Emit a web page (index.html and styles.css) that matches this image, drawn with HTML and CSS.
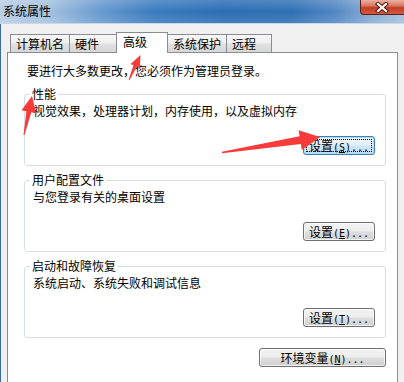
FILE: index.html
```html
<!DOCTYPE html>
<html lang="zh-CN">
<head>
<meta charset="utf-8">
<title>系统属性</title>
<link rel="stylesheet" href="styles.css">
</head>
<body>
<div class="window">
  <div class="titlebar">
    <span class="title">系统属性</span>
    <div class="close">
      <svg width="14" height="11" viewBox="0 0 14 11">
        <path d="M3 2 L11 9 M11 2 L3 9" stroke="#5a1d14" stroke-width="4.2" stroke-linecap="square" fill="none"/>
        <path d="M3 2 L11 9 M11 2 L3 9" stroke="#ffffff" stroke-width="2.2" stroke-linecap="square" fill="none"/>
      </svg>
    </div>
  </div>
  <div class="body">
    <div class="tabs">
      <div class="tab">计算机名</div>
      <div class="tab tab-hw">硬件</div>
      <div class="tab active">高级</div>
      <div class="tab">系统保护</div>
      <div class="tab">远程</div>
    </div>
    <div class="panel">
      <p class="intro">要进行大多数更改，您必须作为管理员登录。</p>
      <fieldset class="group">
        <legend>性能</legend>
        <div class="group-body">
          <p class="desc">视觉效果，处理器计划，内存使用，以及虚拟内存</p>
          <div class="actions"><button class="btn default">设置<span class="mn">(<u>S</u>)...</span></button></div>
        </div>
      </fieldset>
      <fieldset class="group">
        <legend>用户配置文件</legend>
        <div class="group-body">
          <p class="desc">与您登录有关的桌面设置</p>
          <div class="actions"><button class="btn">设置<span class="mn">(<u>E</u>)...</span></button></div>
        </div>
      </fieldset>
      <fieldset class="group">
        <legend>启动和故障恢复</legend>
        <div class="group-body">
          <p class="desc">系统启动、系统失败和调试信息</p>
          <div class="actions"><button class="btn">设置<span class="mn">(<u>T</u>)...</span></button></div>
        </div>
      </fieldset>
      <div class="env-row"><button class="btn wide">环境变量<span class="mn">(<u>N</u>)...</span></button></div>
    </div>
  </div>
  <svg class="annot" width="404" height="382" viewBox="0 0 404 382">
    <polygon points="140.5,55 139.8,68 136.9,66.7 129.4,80.2 128.6,79.8 133.5,65.3 130.6,64"/>
    <polygon points="32,96 36.2,113.2 31.3,112.2 24.5,135.1 23.5,134.9 26.4,111.2 21.5,110.2"/>
    <polygon points="320,137 301.8,150 300.8,144 222.1,153.3 221.9,151.7 299.6,136.2 298.6,130.2"/>
  </svg>
</div>
</body>
</html>
```
FILE: styles.css
```css
* { box-sizing: border-box; }
html, body { margin: 0; padding: 0; }
body {
  width: 404px;
  height: 382px;
  overflow: hidden;
  background: #f0f0f0;
  font-family: "Noto Sans CJK SC", "Noto Sans", sans-serif;
  font-size: 12px;
  color: #000;
}
.window {
  position: relative;
  width: 404px;
  height: 382px;
  overflow: hidden;
  background: #f0f0f0;
}
.titlebar {
  height: 24px;
  display: flex;
  justify-content: space-between;
  align-items: flex-start;
  background:
    linear-gradient(rgba(255,255,255,0.18), rgba(255,255,255,0) 50%, rgba(255,255,255,0.12)),
    linear-gradient(90deg, #b9cde3 0%, #a3c0df 12%, #6699cf 25%, #3a7bbf 38%, #2c6db3 55%, #2e6fb4 72%, #5287c2 83%, #88acd4 92%, #a6c2df 100%);
  border-bottom: 1px solid #c9d8e8;
}
.title {
  padding: 4px 0 0 3px;
  line-height: 14px;
  font-size: 12px;
}
.close {
  width: 50px;
  height: 15px;
  margin-right: -6px;
  border: 1px solid #5b2018;
  border-top: none;
  border-radius: 0 0 0 4px;
  background: linear-gradient(#eab0a0 0%, #d87a63 40%, #c43c24 55%, #d35a40 100%);
  display: flex;
  align-items: center;
  justify-content: center;
  padding-right: 6px;
}
.close svg { display: block; }
.body {
  height: 358px;
  border-left: 1px solid #3d6d9e;
  padding: 8px 6px 0 6px;
}
.tabs {
  display: flex;
  align-items: flex-end;
  height: 20px;
  padding-left: 3px;
  position: relative;
  z-index: 1;
}
.tab {
  height: 18px;
  min-width: 46px;
  padding: 2px 5px 0;
  border: 1px solid #898c95;
  border-bottom: none;
  background: linear-gradient(#f7f7f7, #eeeeee 48%, #e0e0e0 52%, #d7d7d7);
  line-height: 14px;
  margin-left: -1px;
  white-space: nowrap;
}
.tab:first-child { margin-left: 0; }
.tab-hw { min-width: 49px; }
.tab.active {
  height: 21px;
  min-width: 52px;
  padding: 2px 6px 0;
  margin-left: -2px;
  margin-bottom: -1px;
  background: #fff;
  position: relative;
  z-index: 2;
}
.panel {
  height: 340px;
  background: #fff;
  border: 1px solid #898c95;
  padding: 11px 11px 0 16px;
}
.intro {
  margin: 0;
  padding-left: 3px;
  line-height: 14px;
}
.group {
  margin: 9px 0 0;
  padding: 0;
  border: 1px solid #d5dfe5;
  border-radius: 3px;
  min-inline-size: auto;
}
.group + .group { margin-top: 7px; }
.group legend {
  padding: 0 2px;
  margin-left: 5px;
  line-height: 14px;
}
.group-body { padding: 3px 10px 10px 8px; }
.desc {
  margin: 0;
  line-height: 14px;
}
.actions {
  display: flex;
  justify-content: flex-end;
  margin-top: 18px;
}
.btn {
  width: 72px;
  height: 19px;
  padding: 0;
  margin: 0;
  font: inherit;
  font-size: 12px;
  line-height: 17px;
  color: #000;
  text-align: center;
  white-space: nowrap;
  border: 1px solid #707070;
  border-radius: 3px;
  background: linear-gradient(#f4f4f4 0%, #ececec 48%, #dedede 52%, #d0d0d0 100%);
  box-shadow: inset 0 0 0 1px rgba(255,255,255,0.7);
}
.btn.default {
  border-color: #3c7fb1;
  background: linear-gradient(#eef6fc 0%, #e1eff9 48%, #cfe6f6 52%, #c0ddf2 100%);
  box-shadow: inset 0 0 0 1px #a9dcf6;
  outline: 1px dotted #000;
  outline-offset: -4px;
}
.btn.wide { width: 127px; }
.mn {
  font-family: "DejaVu Sans Mono", "Liberation Mono", monospace;
  font-size: 10px;
}
.env-row {
  display: flex;
  justify-content: flex-end;
  margin-top: 10px;
}
.annot {
  position: absolute;
  left: 0;
  top: 0;
  pointer-events: none;
  z-index: 10;
}
.annot polygon { fill: #f73a3a; }
```
